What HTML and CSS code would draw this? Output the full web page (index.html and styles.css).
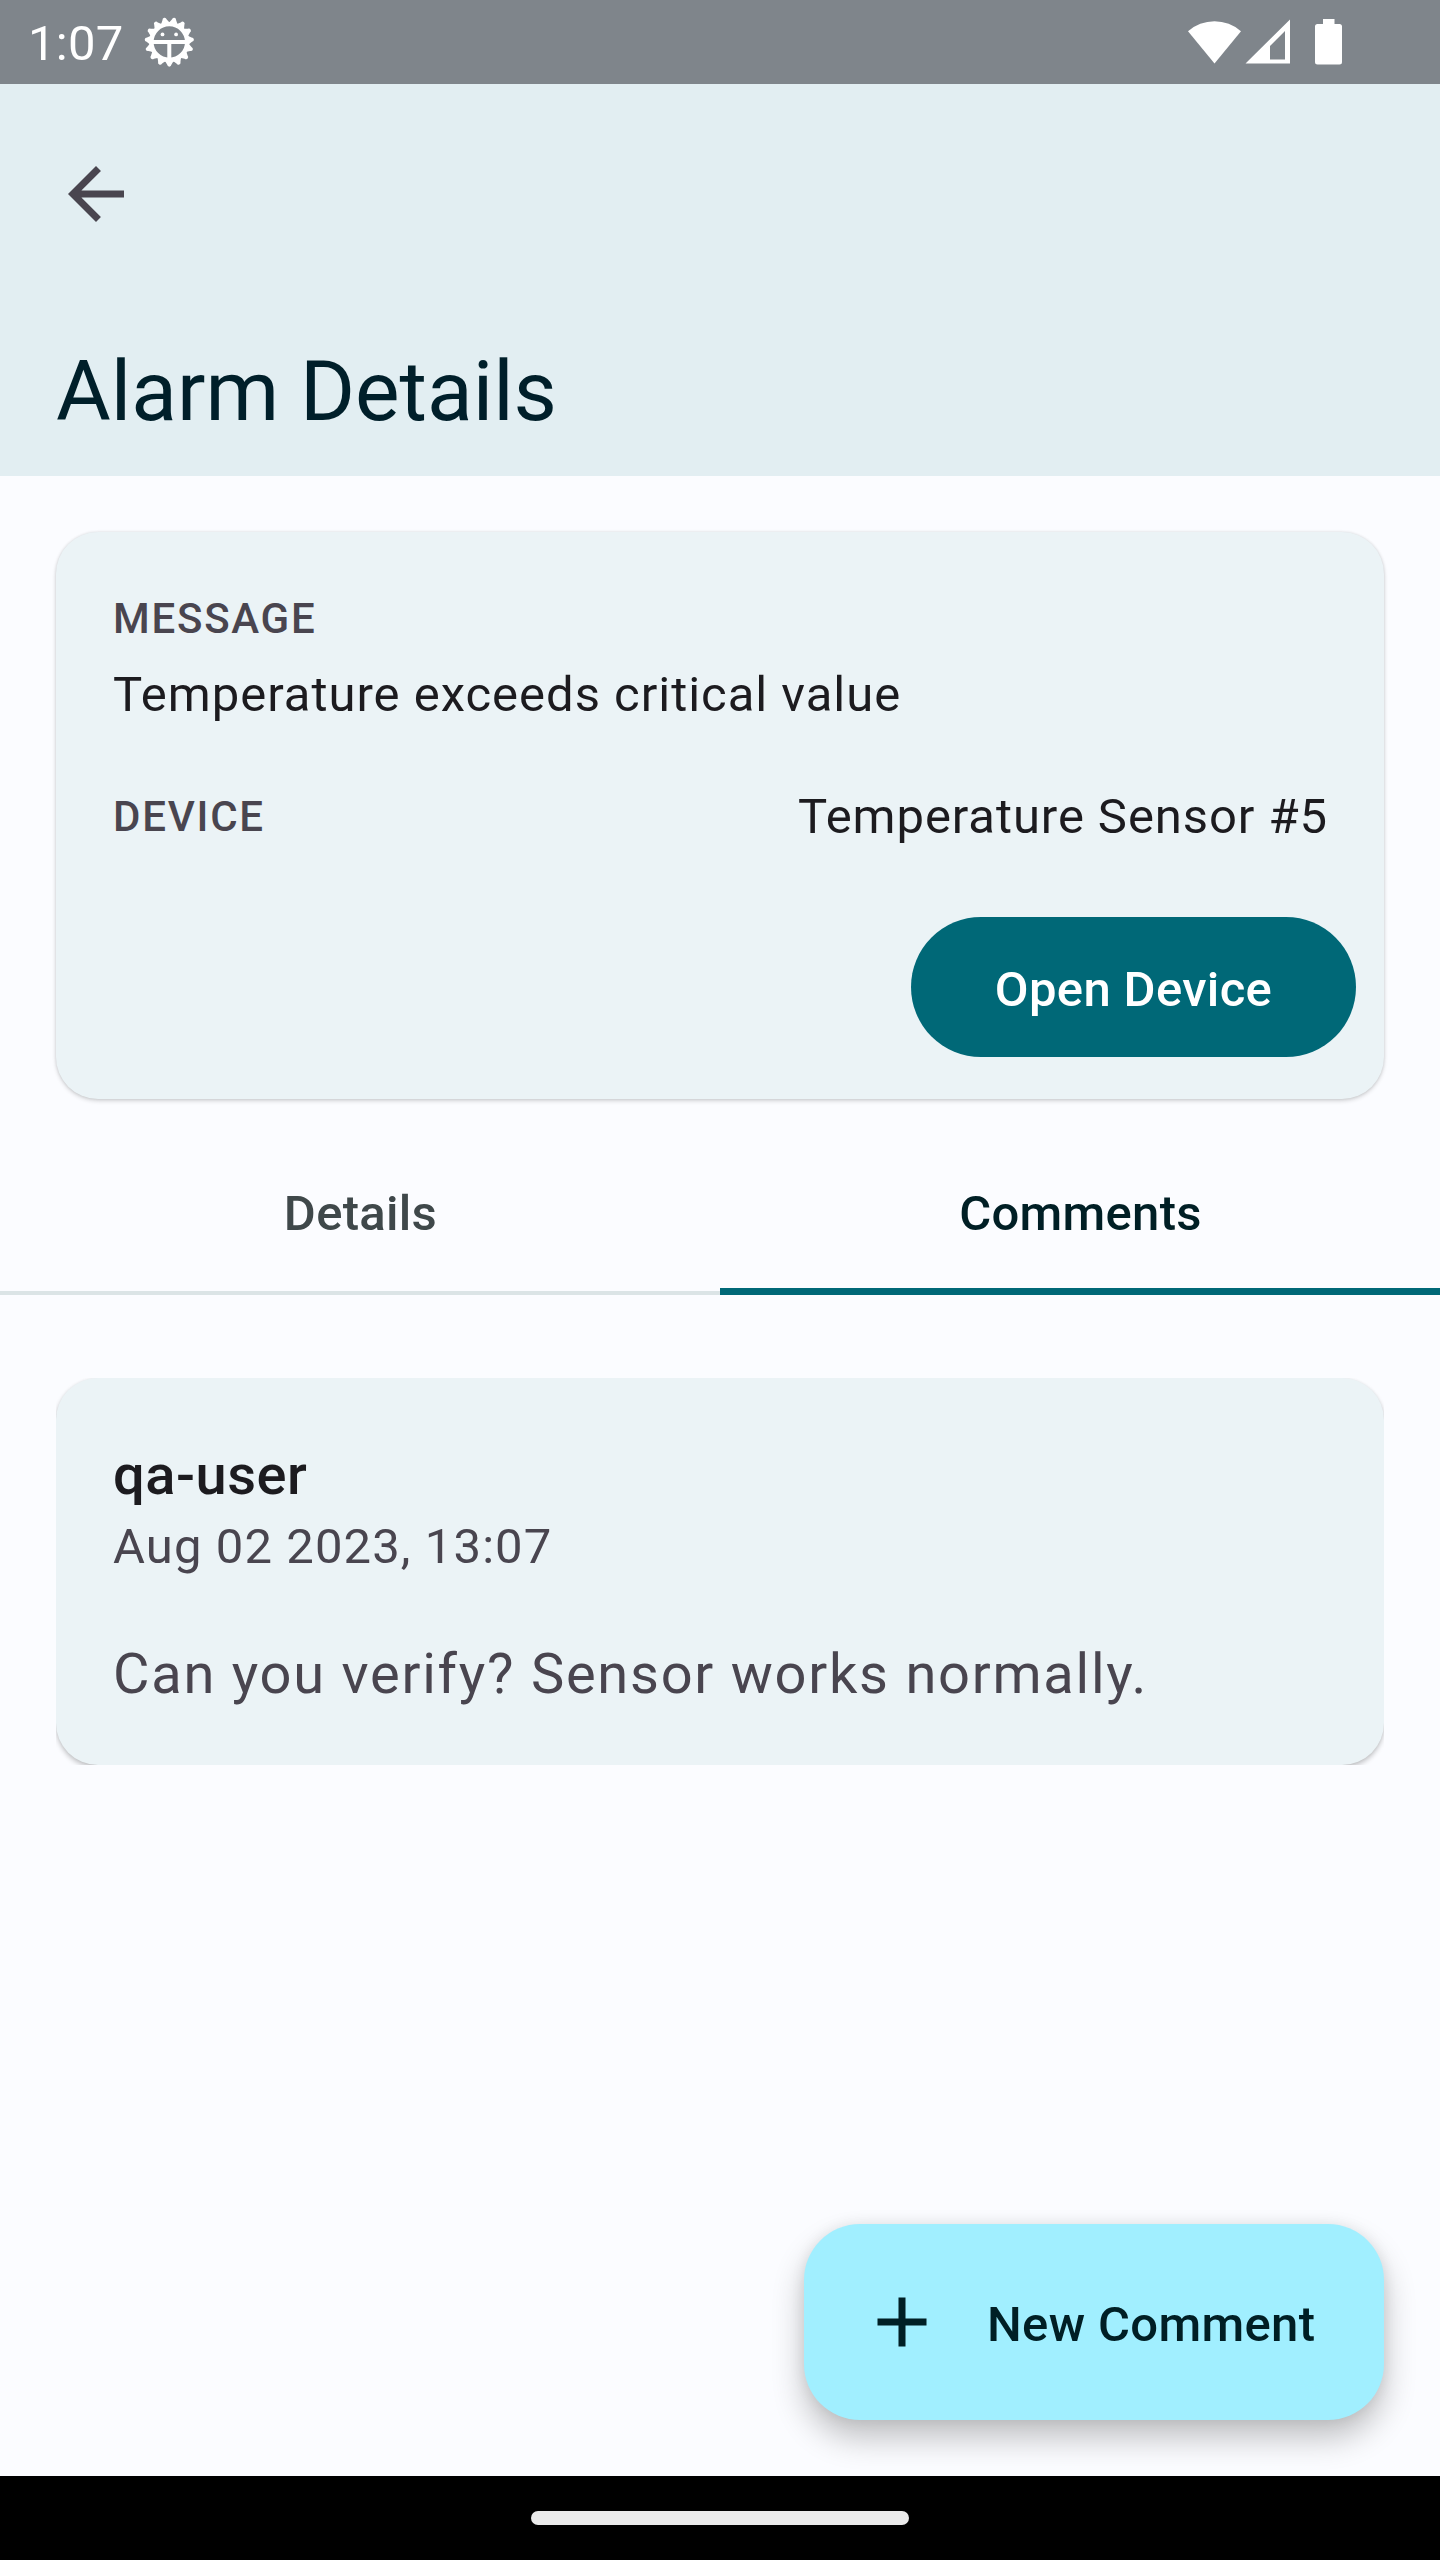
FILE: index.html
```html
<!DOCTYPE html>
<html lang="en">
<head>
<meta charset="utf-8">
<title>Alarm Details</title>
<link rel="stylesheet" href="styles.css">
</head>
<body>
<div class="screen">
  <div class="status-bar">
    <span class="clock">1:07</span>
    <svg class="debug-icon" viewBox="-25.300 -25 50 50" width="50" height="50" fill="#fff">
      <defs><path id="tooth" d="M-4.600 18.500L-2.200 22.600Q-1.800 24.700 0 24.700Q1.800 24.700 2.200 22.600L4.600 18.500Z"/></defs>
      <circle r="17.900" fill="none" stroke="#fff" stroke-width="4.400"/>
      <use href="#tooth"/><use href="#tooth" transform="rotate(24)"/><use href="#tooth" transform="rotate(48)"/>
      <use href="#tooth" transform="rotate(72)"/><use href="#tooth" transform="rotate(96)"/><use href="#tooth" transform="rotate(120)"/>
      <use href="#tooth" transform="rotate(144)"/><use href="#tooth" transform="rotate(168)"/><use href="#tooth" transform="rotate(192)"/>
      <use href="#tooth" transform="rotate(216)"/><use href="#tooth" transform="rotate(240)"/><use href="#tooth" transform="rotate(264)"/>
      <use href="#tooth" transform="rotate(288)"/><use href="#tooth" transform="rotate(312)"/><use href="#tooth" transform="rotate(336)"/>
      <path d="M-17 -2.100H17V2.100H2V17H-2V2.100H-17Z"/>
      <circle cx="-6.800" cy="-7.600" r="1.900"/><circle cx="6.800" cy="-7.600" r="1.900"/>
    </svg>
    <div class="system-icons">
      <svg viewBox="0 0 154 50" width="154" height="50">
        <path fill="#fff" d="M0 15.200A40 40 0 0 1 53 15.200L26.500 47.500Z"/>
        <path fill="#fff" fill-rule="evenodd" d="M57.500 47.500L102 3.500V47.500ZM82 30V43.500H97V15Z"/>
        <path fill="#fff" d="M135 3H146.500V8H151.500Q154 8 154 10.500V46Q154 48.500 151.500 48.500H129.500Q127 48.500 127 46V10.500Q127 8 129.500 8H135Z"/>
      </svg>
    </div>
  </div>
  <header class="app-bar">
    <svg class="back" viewBox="0 0 24 24" width="84" height="84"><path fill="#49454f" d="M20 11H7.830L13.420 5.410L12 4L4 12L12 20L13.410 18.590L7.830 13H20Z"/></svg>
    <h1 class="title">Alarm Details</h1>
  </header>
  <main class="content">
    <section class="card summary">
      <div class="label">MESSAGE</div>
      <div class="message">Temperature exceeds critical value</div>
      <div class="device-row"><span class="label">DEVICE</span><span class="value">Temperature Sensor #5</span></div>
      <button class="open-device">Open Device</button>
    </section>
    <nav class="tabs">
      <div class="tab">Details</div>
      <div class="tab active">Comments</div>
    </nav>
    <div class="comment-clip">
      <article class="card comment">
        <div class="author">qa-user</div>
        <div class="date">Aug 02 2023, 13:07</div>
        <p class="text">Can you verify? Sensor works normally.</p>
      </article>
    </div>
    <button class="fab">
      <svg viewBox="0 0 24 24" width="84" height="84"><path fill="#001f25" d="M19 13H13V19H11V13H5V11H11V5H13V11H19Z"/></svg>
      <span>New Comment</span>
    </button>
  </main>
  <div class="nav-bar"><div class="handle"></div></div>
</div>
</body>
</html>
```
FILE: styles.css
```css
* { box-sizing: border-box; }
body { margin: 0; font-family: Roboto, sans-serif; background: #fbfcff; }
button { font: inherit; border: 0; margin: 0; padding: 0; }
.screen { width: 1440px; height: 2560px; display: flex; flex-direction: column; overflow: hidden; }

.status-bar { height: 84px; flex: none; display: flex; align-items: flex-start; background: #7f858b; padding: 16px 98px 0 28px; color: #fff; }
.clock { font-size: 49px; line-height: 56px; width: 116px; letter-spacing: .3px; white-space: nowrap; }
.debug-icon { flex: none; margin-top: 1px; }
.system-icons { margin-left: auto; }
.system-icons svg { display: block; }

.app-bar { height: 392px; flex: none; background: #e2eef2; padding: 68px 56px 0 54px; display: flex; flex-direction: column; }
.back { display: block; flex: none; }
.title { margin: 107px 0 0 2px; font-size: 84px; line-height: 98px; font-weight: 400; color: #001f2a; white-space: nowrap; }

.content { flex: 1; display: flex; flex-direction: column; padding-top: 56px; }
.card { background: #ebf3f6; border-radius: 42px; box-shadow: 0 2px 4px rgba(0,0,0,.16), 0 0 3px rgba(0,0,0,.1); }
.summary { height: 567px; flex: none; margin: 0 56px; padding: 59px 56px 0 57px; display: flex; flex-direction: column; }
.label { font-size: 42px; line-height: 56px; font-weight: 500; letter-spacing: 1.75px; color: #49454f; }
.message { font-size: 49px; line-height: 70px; letter-spacing: .98px; color: #1c1b1f; margin-top: 13px; }
.device-row { display: flex; justify-content: space-between; align-items: center; height: 70px; margin-top: 52px; }
.value { font-size: 49px; line-height: 70px; letter-spacing: .92px; color: #1c1b1f; }
.open-device { align-self: flex-end; width: 445px; height: 140px; margin: 65px -28px 0 0; border-radius: 70px; background: #006877; color: #fff; font-size: 49px; font-weight: 500; letter-spacing: .35px; line-height: 70px; padding-top: 5px; }

.tabs { height: 168px; flex: none; margin-top: 28px; display: flex; box-shadow: inset 0 -4px #dbe4e6; }
.tab { flex: 1; text-align: center; font-size: 49px; font-weight: 500; letter-spacing: .3px; line-height: 174px; padding-left: 1px; color: #3f484a; }
.tab.active { color: #001f25; box-shadow: inset 0 -7px #006877; }

.comment-clip { margin: 83px 56px 0; height: 387px; flex: none; overflow: hidden; }
.comment { height: 387px; padding: 55px 56px 0 57px; color: #49454f; box-shadow: 0 3px 5px rgba(0,0,0,.22), 0 0 3px rgba(0,0,0,.06); }
.author { font-size: 56px; font-weight: 500; line-height: 84px; letter-spacing: .525px; color: #1c1b1f; }
.date { font-size: 49px; line-height: 56px; letter-spacing: 1.1px; margin-top: 2px; }
.text { margin: 57px 0 0; font-size: 56px; line-height: 84px; letter-spacing: 1.75px; }

.fab { align-self: flex-end; flex: none; margin: auto 56px 56px 0; width: 580px; height: 196px; border-radius: 56px; background: #a1efff; color: #001f25; display: flex; align-items: center; padding-left: 56px; gap: 43px; font-size: 49px; font-weight: 500; letter-spacing: .35px; line-height: 70px; box-shadow: 0 18px 32px rgba(0,0,0,.24), 0 0 14px rgba(0,0,0,.08); }
.fab span { padding-top: 5px; }
.nav-bar { height: 84px; flex: none; background: #000; display: flex; align-items: center; justify-content: center; }
.handle { width: 378px; height: 14px; border-radius: 7px; background: #ebebeb; }
```
